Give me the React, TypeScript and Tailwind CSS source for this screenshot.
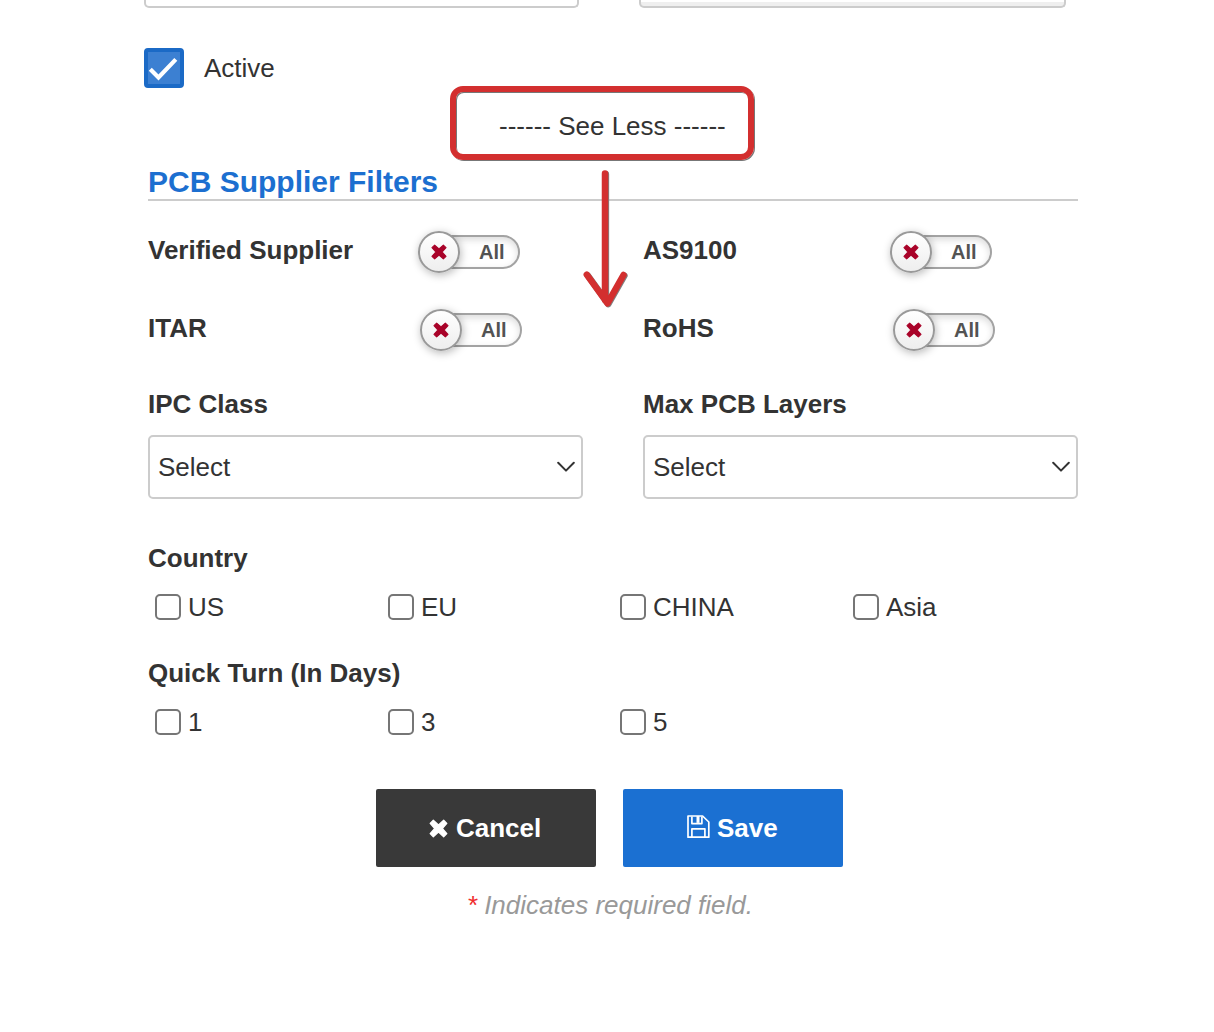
import React from "react";

const XMark = ({ className }: { className: string }) => (
  <svg viewBox="0 0 18 18" className={className} aria-hidden="true">
    <path
      d="M4.1 1.2 9 5.6l4.9-4.4 3 3L12.6 9l4.3 4.8-3 3L9 12.4l-4.9 4.4-3-3L5.4 9 1.1 4.2z"
      fill="currentColor"
      stroke="currentColor"
      strokeWidth="1.2"
      strokeLinejoin="round"
    />
  </svg>
);

const SaveIcon = () => (
  <svg viewBox="0 0 23 24" className="h-6 w-[23px]" fill="none" stroke="currentColor" strokeWidth="1.7" strokeLinejoin="round" aria-hidden="true">
    <path d="M1 1h14.6L21.8 7v15.2H1z" />
    <path d="M4.9 1.4v7.2h10V1.4" />
    <path d="M9.5 1h3v6.9h-3z" fill="currentColor" stroke="none" />
    <path d="M4.9 22v-8.2h13V22" />
  </svg>
);

const Toggle = () => (
  <div className="flex h-[42px] w-[102px] items-center">
    <div className="z-10 flex size-[42px] shrink-0 items-center justify-center rounded-full border-2 border-[#999] bg-linear-to-b from-white to-[#eeeeee] shadow-[1px_2px_8px_rgba(0,0,0,0.28)]">
      <XMark className="size-4 text-[#a90329]" />
    </div>
    <div className="-ml-[26px] flex h-[34px] w-[86px] items-center rounded-full border-2 border-[#a3a3a3] bg-white pl-[43px] text-[20px] leading-5 font-bold text-[#535353] shadow-[inset_0_3px_7px_rgba(0,0,0,0.14)]">
      All
    </div>
  </div>
);

const Filter = ({ label, width }: { label: string; width: string }) => (
  <div className="flex h-[42px]">
    <div className={"h-[38px] shrink-0 leading-[38px] font-bold " + width}>{label}</div>
    <Toggle />
  </div>
);

const Select = ({ label }: { label: string }) => (
  <div className="w-[435px]">
    <div className="h-[46px] leading-[30px] font-bold">{label}</div>
    <div className="flex h-16 items-center justify-between rounded-[5px] border-2 border-[#ccc] pr-[6px] pl-2">
      <span className="leading-[62px]">Select</span>
      <svg viewBox="0 0 18 12" className="h-3 w-[18px]" fill="none" stroke="#333" strokeWidth="2" strokeLinecap="round" strokeLinejoin="round" aria-hidden="true">
        <path d="M1.2 1.8 9 9.6l7.8-7.8" />
      </svg>
    </div>
  </div>
);

const Options = ({ title, items }: { title: string; items: string[] }) => (
  <div>
    <div className="h-[49px] leading-[30px] font-bold">{title}</div>
    <div className="grid grid-cols-[233px_232px_233px_232px]">
      {items.map((item) => (
        <label key={item} className="flex h-[30px] items-center pl-[7px] leading-[30px]">
          <input type="checkbox" className="mr-[7px] size-[26px] shrink-0 appearance-none rounded-[5px] border-2 border-[#767676] bg-white" />
          {item}
        </label>
      ))}
    </div>
  </div>
);

export default function App() {
  return (
    <main className="relative h-[1032px] w-[1214px] overflow-hidden bg-white font-['Liberation_Sans',Arial,sans-serif] text-[26px] text-[#333]">
      <div className="flex h-2 gap-[60px] pl-36">
        <div className="h-2 w-[435px] rounded-b-[5px] border-2 border-t-0 border-[#ccc]" />
        <div className="h-2 w-[427px] rounded-b-[5px] border-2 border-t-0 border-[#ccc] bg-linear-to-b from-white from-[33%] to-[#efefef] to-[34%]" />
      </div>

      <div className="mt-10 flex h-10 items-center gap-5 pl-36">
        <div className="flex size-10 items-center justify-center rounded-[4px] border-4 border-[#1b6ac6] bg-[#3c80d2]">
          <svg viewBox="0 0 32 32" className="size-8" fill="none" stroke="#fff" strokeWidth="4.2" aria-hidden="true">
            <path d="m2.3 17.2 8.2 8.2L27.8 7.4" />
          </svg>
        </div>
        <span className="leading-10">Active</span>
      </div>

      <div className="mt-5 h-9 pl-[499px] leading-9">------ See Less ------</div>

      <div className="ml-[148px] w-[930px]">
        <h2 className="mt-[18px] h-[39px] border-b-2 border-[#ccc] text-[30px] leading-[39px] font-bold text-[#1c6fd0]">
          PCB Supplier Filters
        </h2>
        <div className="mt-[30px] grid grid-cols-[495px_435px] gap-y-9">
          <Filter label="Verified Supplier" width="w-[270px]" />
          <Filter label="AS9100" width="w-[247px]" />
          <Filter label="ITAR" width="w-[272px]" />
          <Filter label="RoHS" width="w-[250px]" />
        </div>
        <div className="mt-[38px] flex justify-between">
          <Select label="IPC Class" />
          <Select label="Max PCB Layers" />
        </div>
        <div className="mt-11 flex flex-col gap-9">
          <Options title="Country" items={["US", "EU", "CHINA", "Asia"]} />
          <Options title="Quick Turn (In Days)" items={["1", "3", "5"]} />
        </div>
      </div>

      <div className="mt-[52px] flex gap-[27px] pl-[376px] font-bold text-white">
        <button className="flex h-[78px] w-[220px] items-center rounded-[2px] bg-[#393939] pl-[53px]">
          <XMark className="mr-2 size-[19px]" />
          Cancel
        </button>
        <button className="flex h-[78px] w-[220px] items-center rounded-[2px] bg-[#1b70d2] pl-16">
          <span className="mr-[7px] -mt-0.5"><SaveIcon /></span>
          Save
        </button>
      </div>

      <p className="mt-[23px] h-[30px] pl-[468px] leading-[30px] text-[#999] italic">
        <span className="mr-[6px] text-[#f02d2d] not-italic">*</span>
        Indicates required field.
      </p>

      <div className="absolute top-[86px] left-[450px] h-[74px] w-[304px] rounded-[13px] border-[6px] border-[#d32f2f] shadow-[1px_1px_0_#777,inset_1px_1px_0_#777]" />
      <svg viewBox="0 0 50 144" className="absolute top-[166px] left-[580px] h-36 w-[50px]" fill="none" strokeWidth="6.5" strokeLinecap="round" strokeLinejoin="round" aria-hidden="true">
        <g stroke="#808080" transform="translate(.9 .7)">
          <path d="M25 7.5V134M6.8 108.7 27.5 137.3 43.5 109" />
        </g>
        <path stroke="#d32f2f" d="M25 7.5V134M6.8 108.7 27.5 137.3 43.5 109" />
      </svg>
    </main>
  );
}
